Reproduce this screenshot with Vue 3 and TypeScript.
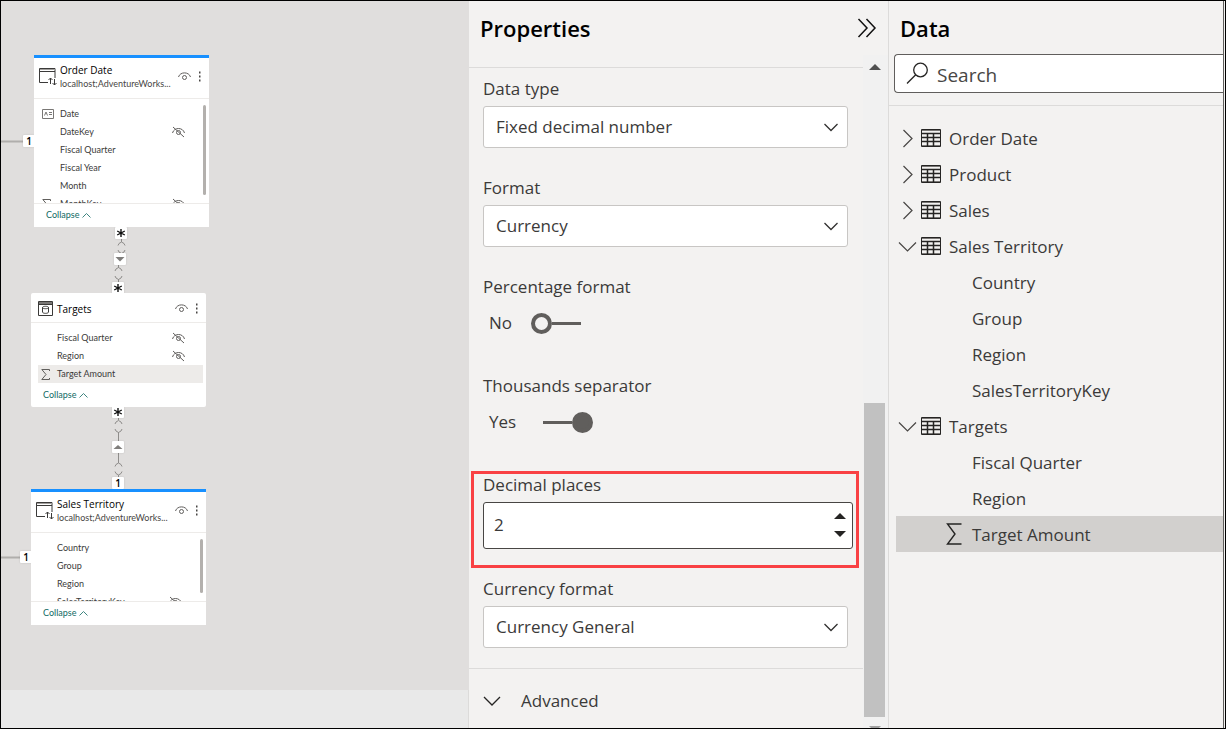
<script setup lang="ts">
import { ref } from 'vue'

interface Row {
  name: string
  icon?: 'id' | 'sigma'
  hidden?: boolean
  selected?: boolean
}
interface Card {
  id: string
  title: string
  source?: string
  scroll?: boolean
  rows: Row[]
}
interface TreeTable {
  name: string
  open: boolean
  fields: string[]
}

const cards: Card[] = [
  {
    id: 'order-date',
    title: 'Order Date',
    source: 'localhost;AdventureWorks...',
    scroll: true,
    rows: [
      { name: 'Date', icon: 'id' },
      { name: 'DateKey', hidden: true },
      { name: 'Fiscal Quarter' },
      { name: 'Fiscal Year' },
      { name: 'Month' },
      { name: 'MonthKey', icon: 'sigma', hidden: true },
    ],
  },
  {
    id: 'targets',
    title: 'Targets',
    rows: [
      { name: 'Fiscal Quarter', hidden: true },
      { name: 'Region', hidden: true },
      { name: 'Target Amount', icon: 'sigma', selected: true },
    ],
  },
  {
    id: 'sales-territory',
    title: 'Sales Territory',
    source: 'localhost;AdventureWorks...',
    scroll: true,
    rows: [
      { name: 'Country' },
      { name: 'Group' },
      { name: 'Region' },
      { name: 'SalesTerritoryKey', hidden: true },
    ],
  },
]

const tables = ref<TreeTable[]>([
  { name: 'Order Date', open: false, fields: [] },
  { name: 'Product', open: false, fields: [] },
  { name: 'Sales', open: false, fields: [] },
  { name: 'Sales Territory', open: true, fields: ['Country', 'Group', 'Region', 'SalesTerritoryKey'] },
  { name: 'Targets', open: true, fields: ['Fiscal Quarter', 'Region', 'Target Amount'] },
])

const percentage = ref(false)
const thousands = ref(true)
const decimals = ref(2)
const selectedField = 'Target Amount'
</script>

<template>
  <div class="app">
    <main class="workspace">
      <div class="canvas">
        <svg class="links" width="240" height="640" viewBox="0 0 240 640" fill="none" aria-hidden="true">
          <path d="M0 140.500H24M0 556.500H21" stroke="#b0aeac" stroke-width="2" />
          <g stroke="#8f8d8b" stroke-width="1">
            <path d="M120.500 238v3M117 244.500l1-2 2.500-1.500 2.500 1.500 1 2M117 249l1 2 2.500 1.500 2.500-1.500 1-2" />
            <path d="M117.500 264v3M114 270l1-2 2.500-1.500 2.500 1.500 1 2M114 275l1 2 2.500 1.500 2.500-1.500 1-2M117.500 278v4" />
            <path d="M117.500 416v3M114 423l1-2 2.500-1.500 2.500 1.500 1 2M114 428l1 2 2.500 1.500 2.500-1.500 1-2M117.500 431v31M114 465.500l1-2 2.500-1.500 2.500 1.500 1 2M114 470.500l1 2 2.500 1.500 2.500-1.500 1-2M117.500 474v4" />
          </g>
        </svg>

        <span class="badge b-left-top">1</span>
        <span class="badge b-left-bottom">1</span>
        <span class="badge star b-a"><svg width="10" height="10" viewBox="0 0 10 10"><path d="M5 1v8M1.200 3l7.600 4M8.800 3l-7.600 4" /></svg></span>
        <span class="badge b-b"><svg width="10" height="10" viewBox="0 0 10 10"><path d="M0.500 3h9L5 7.500z" fill="#7f7d7b" /></svg></span>
        <span class="badge star b-c"><svg width="10" height="10" viewBox="0 0 10 10"><path d="M5 1v8M1.200 3l7.600 4M8.800 3l-7.600 4" /></svg></span>
        <span class="badge star b-d"><svg width="10" height="10" viewBox="0 0 10 10"><path d="M5 1v8M1.200 3l7.600 4M8.800 3l-7.600 4" /></svg></span>
        <span class="badge b-e"><svg width="10" height="10" viewBox="0 0 10 10"><path d="M0.500 7h9L5 3z" fill="#7f7d7b" /></svg></span>
        <span class="badge b-f">1</span>

        <article v-for="card in cards" :key="card.id" class="card" :class="[card.id, { remote: card.source }]">
          <header class="card-head">
            <svg v-if="card.source" class="card-icon" width="18" height="20" viewBox="0 0 18 20" fill="none" stroke="#3b3a39">
              <path d="M9 15.500H0.500V1.500h15.500V11M0.500 4.500H16" />
              <path d="M1 2.500h15" stroke="#a19f9d" />
              <path d="M11.500 17v-6M9.500 13l2-2 2 2M15.500 12v6M13.500 16l2 2 2-2" />
            </svg>
            <svg v-else class="card-icon" width="18" height="18" viewBox="0 0 18 18" fill="none" stroke="#3b3a39">
              <path d="M1.500 1.500h14v14H1.500zM1.500 4.500h14" />
              <path d="M2 2.500h13M2 3.500h13" stroke="#797775" />
              <path d="M5.500 7.500v4.500c0 1.800 6 1.800 6 0V7.500c0-1.600-6-1.600-6 0c0 1.600 6 1.600 6 0" />
            </svg>
            <div class="card-names">
              <h3>{{ card.title }}</h3>
              <p v-if="card.source">{{ card.source }}</p>
            </div>
            <button class="icon-btn eye" aria-label="Hide in report view">
              <svg width="13" height="10" viewBox="0 0 13 10" fill="none" stroke="#605e5c">
                <path d="M0.500 5C2 -0.500 11 -0.500 12.500 5" />
                <circle cx="6.500" cy="5.500" r="2" />
              </svg>
            </button>
            <button class="icon-btn" aria-label="More options">
              <svg width="4" height="12" viewBox="0 0 4 12" fill="#484644">
                <path d="M1 0.500h1.500v2H1zM1 4.500h1.500v2H1zM1 8.500h1.500v2H1z" />
              </svg>
            </button>
          </header>
          <div class="card-body">
            <ul class="rows">
              <li v-for="row in card.rows" :key="row.name" :class="{ selected: row.selected }">
                <span class="row-icon">
                  <svg v-if="row.icon === 'id'" width="12" height="10" viewBox="0 0 12 10" fill="none" stroke="#797775">
                    <path d="M0.500 0.500h11v9H0.500zM2.500 6.500L4 3l1.500 3.500M7 3.500h3M7 5.500h3" />
                  </svg>
                  <svg v-else-if="row.icon === 'sigma'" width="9" height="11" viewBox="0 0 9 11" fill="none" stroke="#605e5c">
                    <path d="M8.500 2V0.500H0.800L5 5.500L0.800 10.500H8.500V9" />
                  </svg>
                </span>
                <span class="row-name">{{ row.name }}</span>
                <svg v-if="row.hidden" width="13" height="12" viewBox="0 0 13 12" fill="none" stroke="#605e5c">
                  <path d="M0.500 7C2 1 11 1 12.500 7M1 1l11 10" />
                  <circle cx="6.500" cy="6.500" r="2" />
                </svg>
              </li>
            </ul>
            <div v-if="card.scroll" class="card-scroll"></div>
          </div>
          <footer class="card-foot">
            <button>
              Collapse
              <svg width="9" height="5" viewBox="0 0 9 5" fill="none" stroke="#3f8580"><path d="M0.500 4.500l4-4 4 4" /></svg>
            </button>
          </footer>
        </article>
      </div>
      <div class="tab-strip"></div>
    </main>

    <section class="properties">
      <header class="panel-head">
        <h2>Properties</h2>
        <button class="icon-btn" aria-label="Collapse pane">
          <svg width="20" height="20" viewBox="0 0 20 20" fill="none" stroke="#111" stroke-width="1.500">
            <path d="M1.500 1l8.500 9-8.500 9M9.500 1l8.500 9-8.500 9" />
          </svg>
        </button>
      </header>
      <div class="panel-main">
        <form class="form" @submit.prevent>
          <div class="field">
            <label for="data-type">Data type</label>
            <div class="select">
              <select id="data-type"><option>Fixed decimal number</option></select>
              <svg width="14" height="9" viewBox="0 0 14 9"><path d="M0.500 1L7 7.500 13.500 1" /></svg>
            </div>
          </div>
          <div class="field">
            <label for="format">Format</label>
            <div class="select">
              <select id="format"><option>Currency</option></select>
              <svg width="14" height="9" viewBox="0 0 14 9"><path d="M0.500 1L7 7.500 13.500 1" /></svg>
            </div>
          </div>
          <div class="field">
            <label for="percentage">Percentage format</label>
            <div class="toggle">
              <span>{{ percentage ? 'Yes' : 'No' }}</span>
              <input id="percentage" v-model="percentage" type="checkbox" />
            </div>
          </div>
          <div class="field">
            <label for="thousands">Thousands separator</label>
            <div class="toggle">
              <span>{{ thousands ? 'Yes' : 'No' }}</span>
              <input id="thousands" v-model="thousands" type="checkbox" />
            </div>
          </div>
          <div class="highlight">
            <label for="decimals">Decimal places</label>
            <div class="spin">
              <input id="decimals" v-model="decimals" type="number" min="0" />
              <div class="spin-btns">
                <button type="button" aria-label="Increase" @click="decimals++">
                  <svg width="12" height="6" viewBox="0 0 12 6"><path d="M0 6L6 0l6 6z" fill="#252423" /></svg>
                </button>
                <button type="button" aria-label="Decrease" @click="decimals--">
                  <svg width="12" height="6" viewBox="0 0 12 6"><path d="M0 0h12L6 6z" fill="#252423" /></svg>
                </button>
              </div>
            </div>
          </div>
          <div class="field last">
            <label for="currency">Currency format</label>
            <div class="select">
              <select id="currency"><option>Currency General</option></select>
              <svg width="14" height="9" viewBox="0 0 14 9"><path d="M0.500 1L7 7.500 13.500 1" /></svg>
            </div>
          </div>
          <button type="button" class="advanced">
            <svg width="18" height="11" viewBox="0 0 18 11" fill="none" stroke="#252423" stroke-width="1.300"><path d="M1 1l8 8 8-8" /></svg>
            Advanced
          </button>
        </form>
        <div class="scrollbar" aria-hidden="true">
          <svg width="12" height="6" viewBox="0 0 12 6"><path d="M0 6L6 0l6 6z" fill="#505050" /></svg>
          <div class="thumb"></div>
          <svg width="12" height="2" viewBox="0 0 12 2"><path d="M0 0h12L10 2H2z" fill="#a0a0a0" /></svg>
        </div>
      </div>
    </section>

    <aside class="data">
      <header class="panel-head"><h2>Data</h2></header>
      <div class="search">
        <svg width="23" height="23" viewBox="0 0 23 23" fill="none" stroke="#252423" stroke-width="1.300">
          <circle cx="14.500" cy="8" r="6.800" />
          <path d="M9.700 12.800L1 21.500" />
        </svg>
        <input type="search" placeholder="Search" aria-label="Search" />
      </div>
      <ul class="tree">
        <li v-for="table in tables" :key="table.name">
          <button class="tree-row" :aria-expanded="table.open" @click="table.open = !table.open">
            <svg class="twisty" width="19" height="19" viewBox="0 0 19 19" fill="none" stroke="#484644" stroke-width="1.200">
              <path v-if="table.open" d="M1 5.500l8.500 8.500L18 5.500" />
              <path v-else d="M5.500 1l8.500 8.500L5.500 18" />
            </svg>
            <svg width="20" height="18" viewBox="0 0 20 18" fill="none" stroke="#252423">
              <path d="M0.500 0.500h19v17H0.500z" />
              <path d="M1 1.500h18M1 16.500h18" stroke="#797775" />
              <path d="M1 4.500h18M1 8.500h18M1 12.500h18" stroke-width="1.500" />
              <path d="M6.500 5v12M12.500 5v12" stroke-width="1.500" />
            </svg>
            <span>{{ table.name }}</span>
          </button>
          <ul v-if="table.open">
            <li v-for="field in table.fields" :key="field">
              <button class="tree-row leaf" :class="{ selected: field === selectedField }">
                <span class="leaf-icon">
                  <svg v-if="field === selectedField" width="16" height="22" viewBox="0 0 16 22" fill="none" stroke="#252423" stroke-width="1.400">
                    <path d="M15.500 1H1.500L9 11 1.500 21H15.500" />
                  </svg>
                </span>
                <span>{{ field }}</span>
              </button>
            </li>
          </ul>
        </li>
      </ul>
    </aside>
    <div class="edge"></div>
  </div>
</template>

<style>
body {
  margin: 0;
}
</style>

<style scoped>
* {
  box-sizing: border-box;
}
.app {
  display: flex;
  min-height: 100vh;
  border: 1px solid #000;
  background: #f3f2f1;
  color: #3b3a39;
  font-family: "Open Sans", "Noto Sans", sans-serif;
  font-size: 17px;
  line-height: 22px;
}
h2,
h3,
p,
ul {
  margin: 0;
  padding: 0;
  list-style: none;
}
button,
input,
select {
  font: inherit;
  color: inherit;
}
button {
  padding: 0;
  border: 0;
  background: none;
  text-align: left;
  cursor: pointer;
}
svg {
  flex: none;
  display: block;
}

/* Model canvas */
.workspace {
  flex: 1;
  min-width: 0;
  display: flex;
  flex-direction: column;
}
.canvas {
  flex: 1;
  position: relative;
  overflow: hidden;
  background: #e0dedd;
}
.tab-strip {
  height: 38px;
  background: #e9e9e9;
  border-right: 1px solid #dcdbda;
}
.links {
  position: absolute;
  top: 0;
  left: 0;
}
.badge {
  position: absolute;
  width: 12px;
  height: 12px;
  display: flex;
  align-items: center;
  justify-content: center;
  background: #fff;
  border-radius: 1px;
  box-shadow: 0 0 2px rgba(0, 0, 0, 0.15);
  color: #000;
  font-size: 10px;
  font-weight: 600;
  line-height: 12px;
}
.star path {
  stroke: #111;
  stroke-width: 1.4;
  fill: none;
}
.b-left-top { left: 22px; top: 134px; }
.b-left-bottom { left: 19px; top: 550px; }
.b-a { left: 114px; top: 226px; }
.b-b { left: 113px; top: 252px; }
.b-c { left: 111px; top: 281px; }
.b-d { left: 111px; top: 405px; }
.b-e { left: 111px; top: 440px; }
.b-f { left: 111px; top: 476px; }

.card {
  position: absolute;
  width: 175px;
  display: flex;
  flex-direction: column;
  background: #fff;
  border-radius: 2px;
  font-family: Lato, "Open Sans", sans-serif;
  font-size: 9px;
  line-height: 18px;
}
.card.remote {
  border-top: 3px solid #1890ff;
  border-radius: 0;
}
.order-date { left: 33px; top: 54px; height: 172px; }
.targets { left: 30px; top: 292px; height: 114px; }
.sales-territory { left: 30px; top: 488px; height: 136px; }
.card-head {
  height: 30px;
  display: flex;
  align-items: center;
  padding: 2px 7px 0 6px;
  border-bottom: 1px solid #edebe9;
}
.remote .card-head {
  height: 41px;
  padding: 0 7px 2px 5px;
}
.card-names {
  flex: 1;
  margin-left: 2px;
  min-width: 0;
  white-space: nowrap;
}
.remote .card-names {
  margin-left: 3px;
}
h3 {
  font-family: "Open Sans", sans-serif;
  font-size: 10px;
  font-weight: 400;
  line-height: 14px;
  color: #000;
}
.card-names p {
  line-height: 14px;
  color: #484644;
}
.eye {
  margin-right: 7px;
}
.card-body {
  flex: 1;
  min-height: 0;
  display: flex;
  overflow: hidden;
  padding: 6px 3px 0 7px;
}
.rows {
  flex: 1;
}
.rows li {
  height: 18px;
  display: flex;
  align-items: center;
  padding-right: 18px;
}
.rows li.selected {
  background: #edebe9;
}
.row-icon {
  width: 19px;
  padding-left: 1px;
}
.targets .row-icon {
  padding-left: 3px;
}
.row-name {
  flex: 1;
}
.card-scroll {
  width: 3px;
  margin-bottom: 8px;
  border-radius: 2px;
  background: #b3b0ad;
}
.card-foot {
  height: 24px;
  padding: 2px 12px 0;
  border-top: 1px solid #edebe9;
  color: #106a64;
}
.targets .card-foot {
  border-color: transparent;
}
.card-foot button {
  display: flex;
  align-items: center;
  gap: 3px;
}

/* Properties pane */
.properties {
  width: 420px;
  display: flex;
  flex-direction: column;
  border-right: 1px solid #dcdbda;
}
.panel-head {
  height: 54px;
  display: flex;
  align-items: center;
  justify-content: space-between;
  padding: 0 11px;
}
h2 {
  font-size: 22px;
  font-weight: 600;
  line-height: 28px;
  color: #000;
}
.panel-main {
  flex: 1;
  display: flex;
}
.form {
  flex: 1;
  margin-top: 12px;
  padding-top: 10px;
  border-top: 1px solid #dcdbda;
}
.field {
  margin: 0 15px 29px 14px;
}
.field label,
.highlight label {
  display: block;
  margin-bottom: 6px;
}
.select {
  position: relative;
}
.select select {
  width: 100%;
  height: 42px;
  padding: 0 40px 0 12px;
  appearance: none;
  border: 1px solid #c8c6c4;
  border-radius: 3px;
  background: #fff;
}
.select svg {
  position: absolute;
  right: 10px;
  top: 17px;
  fill: none;
  stroke: #323130;
  stroke-width: 1.3;
  pointer-events: none;
}
.toggle {
  height: 38px;
  margin-bottom: 33px;
  display: flex;
  align-items: center;
  padding-left: 6px;
}
.toggle span {
  width: 42px;
}
.toggle input {
  appearance: none;
  display: flex;
  align-items: center;
  width: 50px;
  height: 21px;
  margin: 0;
}
.toggle input::before {
  content: "";
  width: 21px;
  height: 21px;
  box-sizing: border-box;
  border: 4px solid #605e5c;
  border-radius: 50%;
}
.toggle input::after {
  content: "";
  flex: 1;
  height: 3px;
  background: #605e5c;
}
.toggle input:checked {
  flex-direction: row-reverse;
  margin-left: 12px;
}
.toggle input:checked::before {
  background: #605e5c;
}
.highlight {
  margin: -3px 4px 10px 2px;
  padding: 0 3px 16px 9px;
  border: 3px solid #f94144;
}
.spin {
  height: 47px;
  display: flex;
  padding-bottom: 2px;
  border: 1px solid #484644;
  border-radius: 3px;
  background: #fff;
  overflow: hidden;
}
.spin input {
  flex: 1;
  min-width: 0;
  padding: 0 10px;
  border: 0;
  outline: 0;
  background: none;
  appearance: textfield;
}
.spin input::-webkit-inner-spin-button {
  appearance: none;
}
.spin-btns {
  display: flex;
  flex-direction: column;
  justify-content: center;
  gap: 12px;
  padding-right: 6px;
}
.field.last {
  margin-bottom: 20px;
}
.advanced {
  width: 100%;
  display: flex;
  align-items: center;
  gap: 20px;
  padding: 21px 14px 16px;
  border-top: 1px solid #dcdbda;
}
.scrollbar {
  width: 25px;
  display: flex;
  flex-direction: column;
  align-items: center;
  padding: 9px 2px 0 0;
  background: #f1f1f1;
}
.thumb {
  width: 21px;
  height: 314px;
  margin: auto 0 9px;
  background: #c1c1c1;
}

/* Data pane */
.data {
  width: 334px;
}
.search {
  height: 39px;
  margin: -1px 0 12px 5px;
  display: flex;
  align-items: center;
  gap: 8px;
  padding-left: 11px;
  border: 1px solid #605e5c;
  border-right: 0;
  border-radius: 4px 0 0 4px;
  background: #fff;
}
.search input {
  flex: 1;
  min-width: 0;
  padding: 2px 0 0;
  border: 0;
  outline: 0;
  background: none;
  font-size: 19px;
  line-height: 26px;
}
.search input::placeholder {
  color: #484644;
}
.tree {
  padding-top: 14px;
  border-top: 1px solid #dcdbda;
}
.tree-row {
  width: 100%;
  height: 36px;
  display: flex;
  align-items: center;
  padding-left: 9px;
}
.tree-row span {
  margin-left: 8px;
  line-height: 24px;
}
.twisty {
  margin-right: 4px;
}
.leaf {
  width: calc(100% - 7px);
  margin-left: 7px;
  padding-left: 42px;
}
.leaf .leaf-icon {
  width: 26px;
  margin-left: 8px;
}
.leaf span + span {
  margin-left: 0;
}
.tree-row span:last-child {
  padding-top: 2px;
}
.leaf.selected {
  background: #d2d0ce;
}
.edge {
  width: 2px;
  border-left: 1px solid #605e5c;
  background: #f3f2f1;
}
</style>
